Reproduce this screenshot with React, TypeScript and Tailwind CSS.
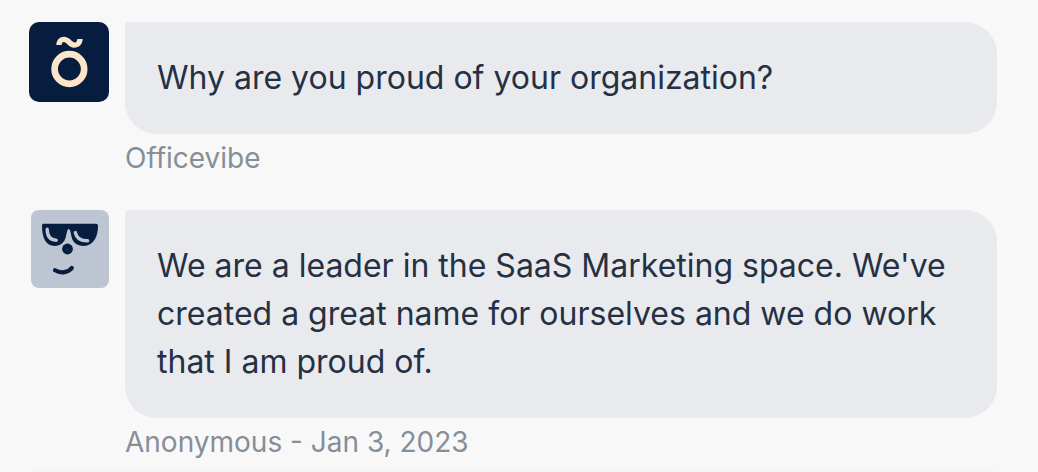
import type { ReactNode } from "react";

function OfficevibeAvatar() {
  return (
    <svg viewBox="0 0 80 80" className="size-20 rounded-[10px] bg-[#071d40]" role="img" aria-label="Officevibe">
      <circle cx="40.4" cy="47" r="14.8" fill="none" stroke="#fce6c9" strokeWidth="6.7" />
      <path
        d="M27.3 23C27.5 17.5 31 14.7 35 14.7C40.5 14.7 43 20.4 46 20.4C47.5 20.4 48.1 19 48.3 17H53.7C53.5 22.5 49.5 25.7 45.5 25.7C39.5 25.7 37.5 20 34.8 20C33.5 20 32.8 21 32.7 23Z"
        fill="#fce6c9"
      />
    </svg>
  );
}

function AnonymousAvatar() {
  return (
    <svg viewBox="0 0 78 78" className="size-[78px] rounded-lg bg-[#bdc5d2]" role="img" aria-label="Anonymous">
      <path
        d="M12.3 13.7H65.2Q67 13.7 67 16C67.2 26 62.5 36 52.5 36C46 36 41.8 32 40.7 27.5C40 24.5 39.4 19 37.8 19C36.2 19 35.6 24 34.8 27C33.4 32.5 29.5 36 23.7 36C14.5 36 11 27 11 16Q11 13.7 12.3 13.7Z"
        fill="#071d40"
      />
      <path
        d="M16.2 19.3C16.2 25.5 19 30 25.2 30.2M44.3 22.6C45.5 28 50 31 56.6 30.8"
        fill="none"
        stroke="#bdc5d2"
        strokeWidth="3.4"
        strokeLinecap="round"
      />
      <circle cx="36.5" cy="39" r="5.4" fill="#071d40" />
      <circle cx="36.5" cy="39.4" r="0.7" fill="#44536f" />
      <path d="M24 60.3C30 63.8 37.5 62.5 40.8 58" fill="none" stroke="#071d40" strokeWidth="4.2" strokeLinecap="round" />
    </svg>
  );
}

type MessageProps = {
  avatar: ReactNode;
  caption: string;
  children: ReactNode;
};

function Message({ avatar, caption, children }: MessageProps) {
  return (
    <article className="flex items-start gap-4">
      <div className="flex w-20 shrink-0 justify-end">{avatar}</div>
      <div className="min-w-0 flex-1">
        <p className="rounded-[32px] rounded-tl-[4px] bg-[#e9eaee] p-8 pr-6 text-[32px] leading-[48px] text-[#253143]">
          {children}
        </p>
        <p className="mt-1 text-[28px] leading-10 text-[#868e99]">{caption}</p>
      </div>
    </article>
  );
}

export default function App() {
  return (
    <main className="min-h-screen bg-[#f8f8f8] pr-[41px] pl-[29px] pt-[22px] font-['Inter',sans-serif]">
      <div className="flex flex-col gap-8 border-b-2 border-[#f5f5f5] pb-2">
        <Message avatar={<OfficevibeAvatar />} caption="Officevibe">
          Why are you proud of your organization?
        </Message>
        <Message avatar={<AnonymousAvatar />} caption="Anonymous - Jan 3, 2023">
          We are a leader in the SaaS Marketing space. We've created a great name for ourselves and we do work that I
          am proud of.
        </Message>
      </div>
    </main>
  );
}
